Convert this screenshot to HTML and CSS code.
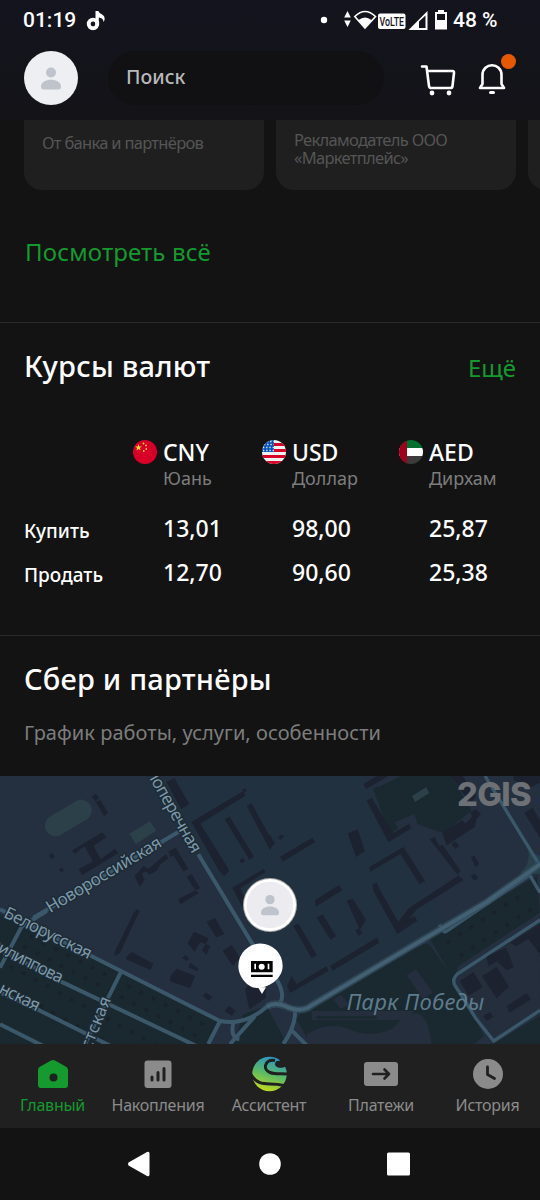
FILE: index.html
```html
<!DOCTYPE html>
<html lang="ru">
<head>
  <meta charset="utf-8">
  <title>Главный</title>
  <link rel="stylesheet" href="styles.css">
</head>
<body>
  <div class="phone">
    <header class="top">
      <div class="status">
        <span class="time">01:19</span>
        <svg class="note" width="20" height="22" viewBox="0 0 20 22">
          <circle cx="7" cy="14" r="4.3" fill="none" stroke="#fff" stroke-width="3.8"/>
          <path d="M9.500 1h3c.3 3 5.500 3 6 6.500 .3 2 0 3-1 4.500 0-3-2-4.200-4.700-4.500V15H9.500z" fill="#fff"/>
        </svg>
        <svg class="signals" width="130" height="22" viewBox="0 0 130 22">
          <circle cx="4" cy="11" r="3.200" fill="#fff"/>
          <path d="M27.500 2l3.300 6.500h-6.600zM27.500 18l3.300-6.500h-6.600z" fill="#fff"/>
          <path d="M34.800 7.500Q45-2.500 55.500 7.500L45 19z" fill="none" stroke="#fff" stroke-width="1.600"/>
          <path d="M38.500 11q6.500-5 13 0L45 19z" fill="#fff"/>
          <rect x="58" y="4.500" width="27.500" height="15.500" rx="2" fill="#fff"/>
          <text class="volte" x="59.500" y="17.200" textLength="24.500" lengthAdjust="spacingAndGlyphs">VoLTE</text>
          <path d="M88.500 21L107.500 2V21zM99 12.500V19h6.500V6.500z" fill="#fff" fill-rule="evenodd"/>
          <path d="M118 1h6v2h3v17.500h-12V3h3zM117 5v6h8V5z" fill="#fff" fill-rule="evenodd"/>
        </svg>
        <span class="percent">48 %</span>
      </div>
      <div class="search-row">
        <div class="avatar">
          <svg width="20" height="24" viewBox="0 0 20 24"><circle cx="10" cy="6.500" r="5" fill="#bfc3cb"/><path d="M0 20.500c0-9 20-9 20 0q0 3-2.500 3h-15q-2.500 0-2.500-3z" fill="#bfc3cb"/></svg>
        </div>
        <div class="search">Поиск</div>
        <svg class="cart" width="36" height="32" viewBox="0 0 36 32">
          <path d="M2 2.500h4.500L9 22q.3 2 2.300 2h19q2 0 2.200-2L34 9q.2-2-1.500-2H7.500" fill="none" stroke="#fff" stroke-width="2.600" stroke-linecap="round" stroke-linejoin="round"/>
          <circle cx="12" cy="29" r="2.400" fill="#fff"/><circle cx="29" cy="29" r="2.400" fill="#fff"/>
        </svg>
        <div class="bell">
          <svg width="28" height="32" viewBox="0 0 28 32">
            <path d="M2 25h24l-2.500-4V12c0-13-19-13-19 0v9z" fill="none" stroke="#fff" stroke-width="2.600" stroke-linejoin="round"/>
            <rect x="11" y="28" width="6" height="3" rx="1.500" fill="#fff"/>
          </svg>
          <i class="dot"></i>
        </div>
      </div>
    </header>

    <div class="cards">
      <div class="card one">От банка и партнёров</div>
      <div class="card">Рекламодатель ООО<br>«Маркетплейс»</div>
      <div class="card"></div>
    </div>
    <a class="all">Посмотреть всё</a>

    <section class="rates">
      <div class="head"><h2>Курсы валют</h2><a class="more">Ещё</a></div>
      <div class="currencies">
        <div class="cur">
          <svg class="flag" width="24" height="24" viewBox="0 0 24 24">
            <circle cx="12" cy="12" r="12" fill="#d80027"/>
            <path d="M5.500 4l.8 2.400h2.500L6.800 7.900l.8 2.500-2.100-1.500-2.100 1.500.8-2.500-2-1.500h2.500z" fill="#ffda44"/>
            <g fill="#ffda44"><circle cx="10.500" cy="3.500" r=".9"/><circle cx="13" cy="5.500" r=".9"/><circle cx="13.300" cy="9" r=".9"/><circle cx="10.700" cy="11" r=".9"/></g>
          </svg>
          <div><b>CNY</b><span>Юань</span></div>
        </div>
        <div class="cur">
          <svg class="flag" width="24" height="24" viewBox="0 0 24 24">
            <clipPath id="round"><circle cx="12" cy="12" r="12"/></clipPath>
            <g clip-path="url(#round)">
              <path d="M0 0h24v24H0z" fill="#f0f0f0"/>
              <path d="M0 3h24v3H0zM0 9h24v3H0zM0 15h24v3H0zM0 21h24v3H0z" fill="#d80027"/>
              <path d="M0 0h12v12H0z" fill="#0052b4"/>
              <path d="M2 4.500h10M1 7.500h11M1 10.500h11M5 1.500h7" stroke="#f0f0f0" stroke-width="1.300" stroke-dasharray="1.300 1.900"/>
            </g>
          </svg>
          <div><b>USD</b><span>Доллар</span></div>
        </div>
        <div class="cur">
          <svg class="flag" width="24" height="24" viewBox="0 0 24 24">
            <g clip-path="url(#round)">
              <path d="M0 0h24v8H0z" fill="#00702f"/><path d="M0 8h24v8H0z" fill="#fff"/><path d="M0 16h24v8H0z" fill="#3b3b3b"/>
              <path d="M0 0h8v24H0z" fill="#a2001d"/>
            </g>
          </svg>
          <div><b>AED</b><span>Дирхам</span></div>
        </div>
      </div>
      <div class="rate"><span>Купить</span><b>13,01</b><b>98,00</b><b>25,87</b></div>
      <div class="rate"><span>Продать</span><b>12,70</b><b>90,60</b><b>25,38</b></div>
    </section>

    <section class="partners">
      <h2>Сбер и партнёры</h2>
      <p>График работы, услуги, особенности</p>
    </section>

    <svg class="map" width="540" height="268" viewBox="0 0 1620 804">
      <path d="M0 0h1620v804H0z" fill="#242f3f"/>
      <path d="M430 30L610 0 1100 0 1420 590 890 700 690 350z" fill="#22313f"/>
      <!-- parks and green blocks -->
      <g fill="#1a282f">
        <path d="M0 415L40 430 90 455 280 543 660 735 620 804H0z"/>
        <path d="M1120 40q5-10 18-8l65-32h150l60 100-5 10-75 56q-10 4-20 0l-60-22-10-30-60 25 12 18-20 12q-6 4-10-5z"/>
        <path d="M920 690L1270 505q15-5 22 5l70 100 90 170-30 24H930l-40-75z"/>
        <path d="M1290 490l320-190 10 110-245 160-15 40z"/>
        <path d="M1480 804l140-85v85zM730 715l70-25 60 114H700z"/>
      </g>
      <path d="M920 775q70-45 140-10 50 20 115-5 80-90 110-10l10 54H920zM935 705h310l-30 28H935z" fill="#252e3d"/>
      <path d="M1220 597l28-17 50 70-30 18zM1000 670l25-14 20 30-22 13z" fill="#252e3f"/>
      <path d="M950 724h180" stroke="#1a282f" stroke-width="8"/>
      <path d="M1372 610l245-170 3 260-140 80-60-90z" fill="#242e3c"/>
      <!-- plazas -->
      <g fill="#2c404a">
        <rect x="128" y="94" width="154" height="64" rx="32" transform="rotate(-31 205 126)"/>
        <path d="M388 173l62-37 19 28-62 41zM1236 60l42-26 10 17-43 27z"/>
        <path d="M1585 225l35 15v55l-60-5q30-20 25-65z" fill="#28404a"/>
      </g>
      <!-- buildings -->
      <g fill="#1c2230">
        <path d="M499 18l24-12 45 79-25 14zM275 62l12-9 10 13-11 10zM287 79l14-7 23 39-11 9-18-29zM215 224l92-55 12 15-39 25 22 41 43-32 10 14-108 65-11-17 43-24-26-46-28 23z"/>
        <path d="M147 238l10-6 8 11-11 7zM177 280l9-6 6 10-9 5zM574 138l155-92 7 13-135 84 87 140-15 18-14-14zM726 42l9-6 5 9-9 5zM674 130l15-8 73 120-14 9zM740 90l15-8 65 120-10 20zM718 252l11-6 6 10-11 6zM697 335l94-56 5 10-75 48 20 45-15 10z"/>
        <path d="M505 226l22-10 38 62-15 8-30-48-8 6zM404 301l27-32 14 10 35-30 18-14 7 13-23 15-12 21-22 12-10-10-13 7 9 18-14 21zM560 303l15-8 25 42-15 5 12 8-55 34-8-14 52-27z"/>
        <path d="M411 400l8 4-60 128-14 7-2-9 58-118zM377 545l18-17 65 35-8 19-70-31zM563 502l19-35 44 20-8 17-18-5-17 28zM620 438l25-12 28 49-24 9zM668 524l27-17 25 38-22 25zM606 523l12-20 13 8-12 25zM546 545l9-7 12 8-6 10zM570 560l26 18-5 8-26-13zM512 600l18-22 55 22-15 36-60-20zM608 660l10-10 19 13-10 11zM674 705l12-15 21 14-11 15zM735 640l28-30 35 15v40l-50 35z"/>
        <path d="M1091 23l65-38 10 14-68 41zM1100 74l15-9 65 107 47-29 7 14-69 42zM1043 172l30-12 22 66-27 17zM840 242l97-57 9 13-98 59zM945 373l72-46 10 15-80 50zM808 174l18 30-18 10zM834 182l10-6 9 4-12 12zM1108 273l102-60 65 102-16 10-58-91-90 53zM1289 190l14-8 15 28 10-4 53 78-8 13 17 15-142 90-35 48-20-10 34-44 148-97zM1326 168l60-35 10 10 20-20-5-15 17-8 15 14-14 15-4 23-85 56z"/>
        <path d="M1353 0h35l40 60-12 16-14-6zM1413 244l10-5 14 25-10 10zM1354 204l12-8 12 14-12 9zM1412 301l12-8 10 12-10 9zM1117 325l13-6 9 21 60 105 45-25 8 14-60 40-70-125zM1040 374l18-6 40 63-18 30zM1573 110l25-15 22 40v50zM1540 0h80v20l-40 20-40-30z"/>
        <path d="M950 425l18-10 40 65-16 12zM880 450l15-8 55 95-15 10zM990 570l142-86 6 16-140 84zM875 600l15 24 90-54 5 15-114 66-10-20zM1066 463l10-6 12 13-12 10zM1380 616l40-28 28 45-42 26zM1446 600l45-28 35 60-36 35zM1458 540l60-24 10 22 12 35-20 10-30-27-24 15zM1530 500l90-56v90l-35-45-38 22zM1520 690l60-38 13 18-65 40zM1450 720l20-12 10 15-20 12z"/>
      </g>
      <g stroke="#1a2028" stroke-width="11" stroke-dasharray="11 30" opacity=".75">
        <path d="M90 480l560 285M70 510l540 280M30 570l480 260M10 630l350 190M1340 500l220-140M1380 540l235-155"/>
      </g>
      <!-- side streets -->
      <g fill="none" stroke="#3b586b" stroke-width="12" stroke-linejoin="round">
        <path d="M100 425L540 165M0 400L130 467 560 685 660 735Q735 750 800 692"/>
        <path d="M595 235L755 500 835 620q20 40 5 60M0 520L190 620 600 815M0 650l120 54 220 110M0 745l130 65"/>
        <path d="M140 405L65 452 0 575M362 590L255 804M660 735L625 804M700 740q-10 45 18 50M765 720L690 804M885 705q2 45-35 99M872 760l50 50"/>
        <path d="M1455 0L1620 270M1585 290L1620 350M1585 300L1340 465q-8 7-14-5l-8-14M1620 432L1375 592q-22 18-9 38 20 30 60 95l55 70L1620 703" stroke-width="10"/>
      </g>
      <path d="M800 692q25-15 55-2 50 23 80-2L1460 378 1620 265" fill="none" stroke="#334d5e" stroke-width="22" opacity=".7"/>
      <path d="M800 692q25-15 55-2 50 23 80-2L1460 378 1620 265" fill="none" stroke="#426072" stroke-width="12"/>
      <g class="street">
        <text x="151" y="412" transform="rotate(-31 151 412)" textLength="394">Новороссийская</text>
        <text x="439" y="-9" transform="rotate(60.500 439 -9)" textLength="280">поперечная</text>
        <text x="8" y="422" transform="rotate(26.500 8 422)" textLength="288">Белорусская</text>
        <text x="-44" y="511" transform="rotate(26.500 -44 511)" textLength="250">Филиппова</text>
        <text x="-6" y="649" transform="rotate(26.500 -6 649)" textLength="130">нская</text>
        <text x="272" y="823" transform="rotate(-68 272 823)" textLength="165">стская</text>
      </g>
      <text class="park" x="1040" y="702" textLength="412">Парк Победы</text>
      <text class="gis" x="1371" y="90" textLength="224">2GIS</text>
      <circle cx="810" cy="387" r="81" fill="#aaa"/><circle cx="810" cy="387" r="78" fill="#fff"/><circle cx="810" cy="387" r="70" fill="#ececf0"/>
      <g fill="#bfc3cb"><circle cx="810" cy="371" r="14"/><path d="M783 410c0-25 54-25 54 0q0 8-8 8h-38q-8 0-8-8z"/></g>
      <path d="M770 636c35 0 78-27 78-67a66 66 0 0 0-133 0c0 40 35 67 55 67z" fill="#fff"/>
      <path d="M774 634l12 20 12-20z" fill="#fff"/>
      <path d="M753 555h65v34h-65zM753 596h65v7h-65z" fill="#000"/>
      <circle cx="785" cy="572" r="9" fill="#fff"/><path d="M763 563h5v17h-5zM803 563h5v17h-5z" fill="#fff"/>
    </svg>

    <nav class="tabs">
      <a class="tab active">
        <svg width="32" height="34" viewBox="0 0 32 34"><path d="M14 3.500q2-1.200 4 0L29.500 10q1.500 1 1.500 3v15q0 3-3 3H4q-3 0-3-3V13q0-2 1.500-3z" fill="#159a2f"/><circle cx="16.500" cy="20.500" r="4" fill="#202020"/></svg>
        <span>Главный</span>
      </a>
      <a class="tab">
        <svg width="32" height="34" viewBox="0 0 32 34"><rect x="2.500" y="3.500" width="27" height="27.500" rx="3" fill="#8b8b8b"/><path d="M10 20v3M16 15.500V23M22 11.500V23" stroke="#202020" stroke-width="3" stroke-linecap="round"/></svg>
        <span>Накопления</span>
      </a>
      <a class="tab">
        <svg width="36" height="36" viewBox="0 0 36 36">
          <defs><linearGradient id="sber" x1=".6" y1="0" x2=".3" y2="1"><stop offset="0" stop-color="#2b94c4"/><stop offset=".5" stop-color="#5cba65"/><stop offset="1" stop-color="#c8dc18"/></linearGradient></defs>
          <circle cx="18.500" cy="18" r="17.300" fill="url(#sber)"/>
          <path d="M24 4.500c-10-1.500-13 9-5 12 5 2 11 1 17 1.500M0 18.500c5 8.500 11 9.500 19 9.500 7 0 10 .5 14 1.500" fill="none" stroke="#202020" stroke-width="3"/>
          <path d="M36 10c-5 3-12 2-12-2 0-3 3-4 5-3L27 0h9z" fill="#202020"/>
        </svg>
        <span>Ассистент</span>
      </a>
      <a class="tab">
        <svg width="34" height="34" viewBox="0 0 34 34"><rect x="0" y="5" width="34" height="24" rx="3" fill="#8b8b8b"/><path d="M9 17h16M20.500 12.500L25 17l-4.500 4.500" fill="none" stroke="#202020" stroke-width="2.600" stroke-linecap="round" stroke-linejoin="round"/></svg>
        <span>Платежи</span>
      </a>
      <a class="tab">
        <svg width="32" height="34" viewBox="0 0 32 34"><circle cx="16" cy="17" r="15" fill="#8b8b8b"/><path d="M15.500 10v7.500l7 4" fill="none" stroke="#202020" stroke-width="2.800" stroke-linecap="round" stroke-linejoin="round"/></svg>
        <span>История</span>
      </a>
    </nav>
    <div class="android">
      <svg width="540" height="72" viewBox="0 0 540 72" fill="#fff">
        <path d="M128.500 34.500L147 24q2.500-1 2.500 1.500v21q0 2.500-2.500 1.500L128.500 37.500q-1-1.500 0-3z"/>
        <circle cx="270" cy="36" r="10.800"/><rect x="387" y="24.500" width="23" height="23" rx="1.500"/>
      </svg>
    </div>
  </div>
</body>
</html>
```
FILE: styles.css
```css
body {
  margin: 0;
  background: #131313;
}

.phone {
  width: 540px;
  height: 1200px;
  overflow: hidden;
  display: flex;
  flex-direction: column;
  background: #131313;
  color: #fff;
  font-family: "Noto Sans", sans-serif;
  font-size: 20px;
}

.top {
  height: 120px;
  background: linear-gradient(#14141e, #131318);
}

.status {
  display: flex;
  height: 41px;
  box-sizing: border-box;
  padding: 9px 0 0 23px;
  font: 500 21px/23px Roboto, sans-serif;
}

.time {
  width: 63px;
}

.note {
  margin-top: 1px;
}

.signals {
  margin-left: 214px;
}

.volte {
  font: 500 13px Roboto, sans-serif;
  fill: #14141e;
}

.percent {
  margin-left: 3px;
}

.search-row {
  display: flex;
  padding: 10px 24px 0;
}

.avatar {
  width: 54px;
  height: 54px;
  border-radius: 50%;
  background: #edeff2;
  display: flex;
  align-items: center;
  justify-content: center;
}

.search {
  box-sizing: border-box;
  width: 276px;
  height: 54px;
  margin-left: 30px;
  padding-left: 18px;
  border-radius: 27px;
  background: #111114;
  color: #b9b9bb;
  font-size: 19.5px;
  font-weight: 500;
  line-height: 52px;
}

.cart {
  margin: 13px 0 0 36px;
}

.bell {
  position: relative;
  margin: 12px 0 0 22px;
}

.dot {
  position: absolute;
  left: 23px;
  top: -9px;
  width: 15px;
  height: 15px;
  border-radius: 50%;
  background: #e65900;
}

.cards {
  display: flex;
  gap: 12px;
  padding-left: 24px;
  height: 70px;
}

.card {
  flex: none;
  box-sizing: border-box;
  width: 240px;
  padding: 11px 18px;
  border-radius: 0 0 18px 18px;
  background: #1f1f1f;
  color: #555;
  font-size: 16.5px;
  letter-spacing: -0.7px;
  line-height: 18px;
}

.card.one {
  padding-top: 14px;
}

.all {
  margin: 47px 25px 0;
  height: 85px;
  color: #159a2f;
  font-size: 24px;
  letter-spacing: 0.15px;
  line-height: 30px;
}

.rates {
  height: 313px;
  box-sizing: border-box;
  border-top: 1px solid #2a2a2a;
  padding: 23px 24px 0;
}

.head {
  display: flex;
  justify-content: space-between;
  height: 93px;
}

h2 {
  margin: 0;
  font-size: 29px;
  font-weight: 500;
  letter-spacing: 0.2px;
  line-height: 40px;
}

.more {
  color: #159a2f;
  font-size: 24px;
  line-height: 43px;
}

.currencies {
  display: grid;
  grid-template-columns: 129px 137px 120px;
  padding-left: 109px;
  height: 70px;
}

.cur {
  display: flex;
  gap: 6px;
}

.flag {
  margin-top: 1px;
}

.cur b {
  display: block;
  font-size: 23px;
  font-weight: 500;
  line-height: 26px;
}

.cur span {
  display: block;
  color: #7d7d7d;
  font-size: 18px;
  line-height: 26px;
}

.rate {
  display: grid;
  grid-template-columns: 139px 129px 137px 70px;
  height: 44px;
  font-size: 19px;
  font-weight: 500;
  line-height: 42px;
}

.rate span {
  padding-top: 1px;
}

.rate b {
  font-size: 23px;
  font-weight: 500;
  line-height: 38px;
}

.partners {
  height: 141px;
  box-sizing: border-box;
  border-top: 1px solid #2a2a2a;
  padding: 23px 24px 0;
}

.partners p {
  margin: 20px 0 0;
  color: #7d7d7d;
  font-size: 20px;
  letter-spacing: 0.05px;
  line-height: 28px;
}

.map {
  display: block;
  flex: none;
}

.street {
  font-size: 51px;
  fill: #7c98a8;
  stroke: #1d2b36;
  stroke-width: 8px;
  paint-order: stroke;
}

.park {
  font-size: 66px;
  font-style: italic;
  fill: #5e7b8d;
}

.gis {
  font: 800 98px Inter, sans-serif;
  fill: #6d7074;
}

.tabs {
  display: grid;
  grid-template-columns: 105px 106px 116px 108px 105px;
  height: 84px;
  background: #202020;
}

.tab {
  display: flex;
  flex-direction: column;
  align-items: center;
  padding-top: 12px;
  color: #8b8b8b;
  font-size: 16px;
  letter-spacing: -0.25px;
  line-height: 22px;
  white-space: nowrap;
}

.tab svg {
  height: 36px;
  flex: none;
}

.tab span {
  margin-top: 2px;
}

.active {
  color: #159a2f;
}

.android {
  height: 72px;
}
```
